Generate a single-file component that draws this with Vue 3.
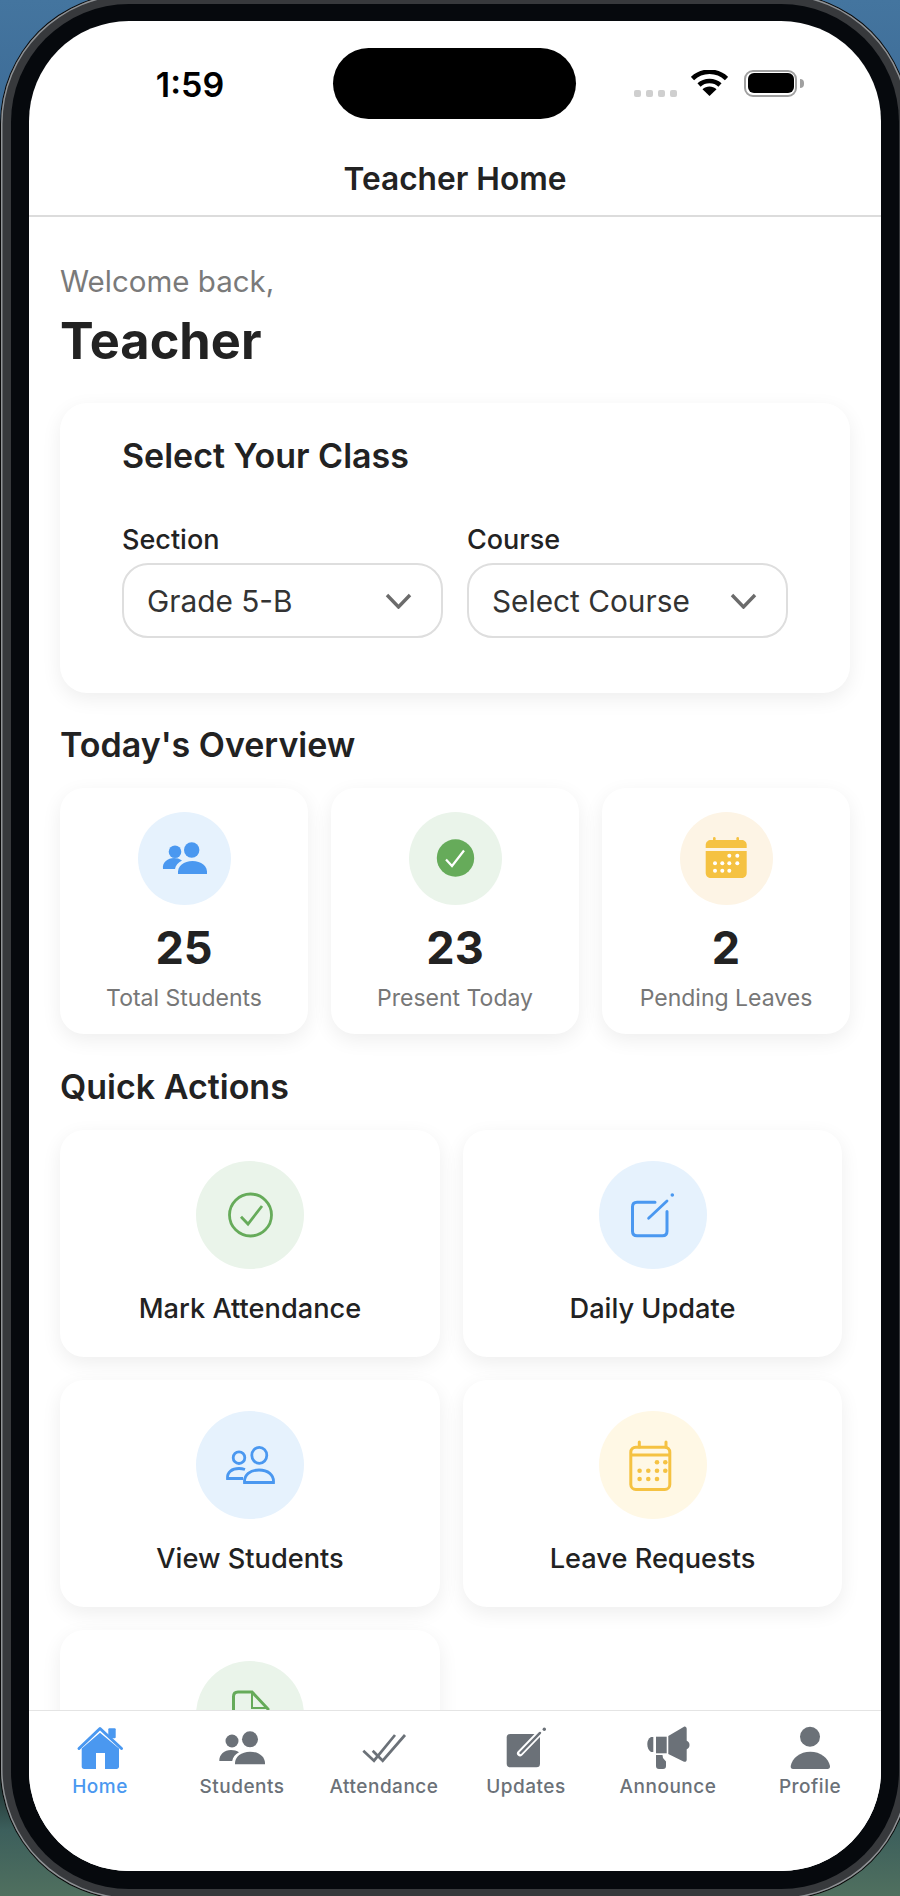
<template>
  <div class="desk">
    <div class="bezel">
      <div class="bezel-inner">
        <div class="screen">
          <div class="status-bar">
            <div class="time-wrap"><span class="time">1:59</span></div>
            <div class="island"></div>
            <div class="status-icons">
              <div class="signal"><i></i><i></i><i></i><i></i></div>
              <svg class="wifi" width="37" height="26" viewBox="0 0 37 26">
                <path d="M1.5 8.5C11 -0.5 26 -0.5 35.5 8.5" fill="none" stroke="#000" stroke-width="4.6" />
                <path d="M8 15C13.8 9.7 23.2 9.7 29 15" fill="none" stroke="#000" stroke-width="4.6" />
                <path d="M11.5 19.2C15.5 15.6 21.5 15.6 25.5 19.2L18.5 26Z" fill="#000" />
              </svg>
              <div class="battery"><div class="battery-level"></div></div>
              <div class="battery-nub"></div>
            </div>
          </div>

          <header class="top-header">Teacher Home</header>

          <main class="content">
            <p class="welcome">Welcome back,</p>
            <h1 class="name">Teacher</h1>

            <section class="class-card">
              <h2 class="class-title">Select Your Class</h2>
              <div class="pickers">
                <div class="picker" v-for="p in pickers" :key="p.label">
                  <label>{{ p.label }}</label>
                  <div class="select-box">
                    <span>{{ p.value }}</span>
                    <svg width="27" height="16" viewBox="0 0 27 16">
                      <path d="M2 2L13.5 14L25 2" fill="none" stroke="#6b6b6b" stroke-width="3.4" />
                    </svg>
                  </div>
                </div>
              </div>
            </section>

            <h2 class="section-title overview-title">Today's Overview</h2>
            <div class="stats">
              <div class="stat-card">
                <div class="stat-icon blue-bg">
                  <svg width="93" height="93" viewBox="0 0 93 93" fill="#4a98f0">
                    <circle cx="53.7" cy="38" r="7.7" />
                    <circle cx="37" cy="39.7" r="6.3" />
                    <path d="M40 62C39 54 46 49 54.500 49C63 49 70 54 69 62Z" />
                    <path d="M25 57C24 50 30 46 36 46C39 46 41.500 46.800 44 48.500C40 50.500 37.500 53.500 37 57Z" />
                  </svg>
                </div>
                <div class="stat-num">25</div>
                <div class="stat-label">Total Students</div>
              </div>
              <div class="stat-card">
                <div class="stat-icon green-bg">
                  <svg width="93" height="93" viewBox="0 0 93 93">
                    <circle cx="46.500" cy="46" r="18.700" fill="#66ab5a" />
                    <path d="M37 47.500L43 54L55 38.500" fill="none" stroke="#fff" stroke-width="2.200" />
                  </svg>
                </div>
                <div class="stat-num">23</div>
                <div class="stat-label">Present Today</div>
              </div>
              <div class="stat-card">
                <div class="stat-icon orange-bg">
                  <svg width="93" height="93" viewBox="0 0 93 93" fill="#f5c242">
                    <path d="M25.700 36V33C25.700 30 28 28 31 28H61.400C64.400 28 66.700 30 66.700 33V36Z" />
                    <rect x="33" y="25" width="2.600" height="5" rx="1.300" />
                    <rect x="56.400" y="25" width="2.600" height="5" rx="1.300" />
                    <path d="M25.700 39H66.700V61C66.700 64 64.400 66 61.400 66H31C28 66 25.700 64 25.700 61Z" />
                    <g fill="#fff">
                      <circle v-for="d in statDots" :key="d[0] + '-' + d[1]" :cx="d[0]" :cy="d[1]" r="2" />
                    </g>
                  </svg>
                </div>
                <div class="stat-num">2</div>
                <div class="stat-label">Pending Leaves</div>
              </div>
            </div>

            <h2 class="section-title actions-title">Quick Actions</h2>
            <div class="actions">
              <div class="action-card">
                <div class="action-icon green-bg">
                  <svg width="108" height="108" viewBox="0 0 108 108" fill="none" stroke="#66ab5a" stroke-width="2.800">
                    <circle cx="54.500" cy="54" r="21" />
                    <path d="M45 55.700L52 63L66 45" />
                  </svg>
                </div>
                <span>Mark Attendance</span>
              </div>
              <div class="action-card">
                <div class="action-icon blue-bg">
                  <svg width="108" height="108" viewBox="0 0 108 108" fill="none" stroke="#4a98f0" stroke-width="3" stroke-linecap="round">
                    <path d="M56 41.200H38C35 41.200 33.500 42.700 33.500 45.700V70.300C33.500 73.300 35 74.800 38 74.800H63.500C66.500 74.800 68 73.300 68 70.300V50.500" />
                    <path d="M49.600 57.300L68 40" stroke-width="2.800" />
                    <circle cx="73.300" cy="34" r="1.800" fill="#4a98f0" stroke="none" />
                  </svg>
                </div>
                <span>Daily Update</span>
              </div>
              <div class="action-card">
                <div class="action-icon blue-bg">
                  <svg width="108" height="108" viewBox="0 0 108 108" fill="none" stroke="#4a98f0" stroke-width="2.800">
                    <ellipse cx="63.300" cy="44.300" rx="7.500" ry="8" />
                    <circle cx="43" cy="46.700" r="5.800" />
                    <path d="M48.500 71.500C48 64 54 59 63 59C72 59 78 64 77.500 71.500Z" />
                    <path d="M47 67.500H31.500C31 61 36 57.500 43 57.500C45 57.500 47 57.800 49 58.500" />
                  </svg>
                </div>
                <span>View Students</span>
              </div>
              <div class="action-card">
                <div class="action-icon yellow-bg">
                  <svg width="108" height="108" viewBox="0 0 108 108" fill="none" stroke="#f5c242" stroke-width="3">
                    <rect x="31.800" y="36.200" width="39" height="42.300" rx="5" />
                    <path d="M31.800 44H70.800" />
                    <path d="M40.300 31V36M67 31V36" stroke-linecap="round" />
                    <g fill="#f5c242" stroke="none">
                      <circle v-for="d in actionDots" :key="d[0] + '-' + d[1]" :cx="d[0]" :cy="d[1]" r="2.300" />
                    </g>
                  </svg>
                </div>
                <span>Leave Requests</span>
              </div>
              <div class="action-card">
                <div class="action-icon green-bg">
                  <svg width="108" height="108" viewBox="0 0 108 108" fill="none" stroke="#66ab5a" stroke-width="3">
                    <path d="M42 31H56L72 48V72C72 75 70 77 67 77H42C39 77 37.500 75 37.500 72V35.500C37.500 33 39 31 42 31Z" />
                    <path d="M56 31V47H72" stroke-width="2" />
                  </svg>
                </div>
              </div>
            </div>
          </main>

          <nav class="tab-bar">
            <div class="tab active">
              <svg width="60" height="46" viewBox="0 0 60 46" fill="#4a98f0">
                <path d="M9 23.500L30 3.500L51.500 23.500" fill="none" stroke="#4a98f0" stroke-width="3" stroke-linecap="round" stroke-linejoin="round" />
                <rect x="38.300" y="3.300" width="7.400" height="10" rx="1" />
                <path d="M11.700 23.500L30 7.700L49 23.500V41.500C49 43 48 44 46.500 44H35V28H26V44H14.200C12.700 44 11.700 43 11.700 41.500Z" />
              </svg>
              <span>Home</span>
            </div>
            <div class="tab">
              <svg width="60" height="46" viewBox="0 0 60 46" fill="#6b7178">
                <circle cx="38" cy="14.300" r="8" />
                <circle cx="20" cy="16" r="6.500" />
                <path d="M23 39.300C22.500 32 29 26.700 38 26.700C47 26.700 53.500 32 53 39.300Z" />
                <path d="M7.300 36C7 29.500 12.500 25 19 25C22 25 24.800 25.800 27 27.300C23 29.300 20.800 32.500 20.200 36Z" />
              </svg>
              <span>Students</span>
            </div>
            <div class="tab">
              <svg width="60" height="46" viewBox="0 0 60 46" fill="none" stroke="#6b7178" stroke-width="2.700">
                <path d="M9.300 25.700L20 35.700L41 10" />
                <path d="M18.700 25.700L28.700 35.700L51 10" />
              </svg>
              <span>Attendance</span>
            </div>
            <div class="tab">
              <svg width="60" height="46" viewBox="0 0 60 46">
                <rect x="10.700" y="9" width="33.300" height="33.300" rx="3.500" fill="#6b7178" />
                <path d="M24 28.300L44 7.700" fill="none" stroke="#fff" stroke-width="6" stroke-linecap="round" />
                <path d="M24.500 28L44 7.900" fill="none" stroke="#6b7178" stroke-width="2.400" stroke-linecap="round" />
                <circle cx="48.300" cy="4.300" r="1.700" fill="#6b7178" />
              </svg>
              <span>Updates</span>
            </div>
            <div class="tab">
              <svg width="60" height="46" viewBox="0 0 60 46" fill="#6b7178">
                <path d="M9.300 19C9.300 16 10.500 13.500 13 12H15.300V27H13C10.500 25.500 9.300 22.500 9.300 19Z" />
                <rect x="18" y="11.700" width="10.700" height="16.600" />
                <path d="M18 30H24.500L25 33L28 36.500V41C28 43 27 44 25 44H21C19 44 18 43 18 41Z" />
                <path d="M30.300 11L46 1.700C47.600 1.300 48.700 2.300 48.700 4V34.500C48.700 36.300 47.500 37.200 46 36.700L30.300 29Z" />
                <path d="M48 15.500C50.500 16 51.500 18 51.500 20C51.500 22 50.500 24 48 24.500Z" />
              </svg>
              <span>Announce</span>
            </div>
            <div class="tab">
              <svg width="60" height="46" viewBox="0 0 60 46" fill="#6b7178">
                <circle cx="30" cy="11.700" r="10" />
                <path d="M10.700 41C12 33 20 26.700 30.300 26.700C40.500 26.700 48.500 33 50 41C50.300 43 49 44 47.500 44H13C11.500 44 10.500 43 10.700 41Z" />
              </svg>
              <span>Profile</span>
            </div>
          </nav>
        </div>
      </div>
    </div>
  </div>
</template>

<script setup>
const pickers = [
  { label: 'Section', value: 'Grade 5-B' },
  { label: 'Course', value: 'Select Course' }
]

const statDots = [
  [49.3, 43.7], [57.3, 43.7],
  [35, 51.3], [42.3, 51.3], [49.3, 51.3], [57.3, 51.3],
  [35, 58.7], [42.3, 58.7], [49.3, 58.7]
]

const actionDots = [
  [58, 51.3], [66.3, 51.3],
  [40.6, 59.7], [49.3, 59.7], [58, 59.7], [66.3, 59.7],
  [40.6, 68], [49.3, 68], [58, 68]
]
</script>

<style>
html, body {
  margin: 0;
  background: #0c0c0c;
}
</style>

<style scoped>
.desk {
  width: 900px;
  height: 1896px;
  overflow: hidden;
  display: flex;
  align-items: flex-start;
  font-family: Inter, "Liberation Sans", sans-serif;
  color: #222;
  background: linear-gradient(180deg, #44759f 0, #3c6a95 140px, #0b0c0d 300px, #0b0c0d 1740px, #3c5f5c 1830px, #50705f 1896px);
}

.bezel {
  flex: none;
  width: 908px;
  margin: -6px 0 0 1px;
  padding: 10px;
  box-sizing: border-box;
  border-radius: 130px;
  background: #37393c;
  box-shadow: inset 0 0 0 1.5px #8f9295, 0 0 0 1px #0a0a0a;
}

.bezel-inner {
  padding: 17px 18px 18px;
  border-radius: 118px;
  background: #06090d;
}

.screen {
  height: 1850px;
  border-radius: 100px;
  overflow: hidden;
  background: #fff;
  display: flex;
  flex-direction: column;
}

.status-bar {
  flex: none;
  height: 120px;
  display: flex;
}

.time-wrap {
  width: 304px;
  padding: 41px 0 0 18px;
  box-sizing: border-box;
  text-align: center;
}

.time {
  font-size: 34px;
  line-height: 46px;
  font-weight: 600;
  color: #000;
}

.island {
  width: 243px;
  height: 71px;
  margin-top: 27px;
  border-radius: 36px;
  background: #000;
}

.status-icons {
  display: flex;
  align-items: center;
  height: 28px;
  margin: 48px 0 0 58px;
}

.signal {
  display: flex;
  gap: 5px;
  margin: 20px 14px 0 0;
}

.signal i {
  width: 7px;
  height: 7px;
  border-radius: 2px;
  background: #cfcfcf;
}

.wifi {
  margin-right: 16px;
}

.battery {
  width: 53px;
  height: 27px;
  padding: 1.5px;
  box-sizing: border-box;
  border: 2.5px solid #a0a0a0;
  border-radius: 9px;
}

.battery-level {
  height: 100%;
  border-radius: 6px;
  background: #000;
}

.battery-nub {
  width: 4px;
  height: 9px;
  margin-left: 3px;
  border-radius: 0 4px 4px 0;
  background: #a0a0a0;
}

.top-header {
  flex: none;
  height: 76px;
  line-height: 76px;
  text-align: center;
  font-size: 31.7px;
  font-weight: 600;
  border-bottom: 2px solid #dcdcdc;
  box-sizing: border-box;
}

.content {
  flex: 1;
  min-height: 0;
  overflow: hidden;
  padding: 46px 31px 0;
}

.welcome {
  margin: 0;
  font-size: 29.5px;
  line-height: 36px;
  color: #7a7a7a;
}

.name {
  margin: 12px 0 32px;
  font-size: 50.5px;
  line-height: 60px;
  font-weight: 700;
}

.class-card {
  height: 290px;
  padding: 33px 62px 0;
  box-sizing: border-box;
  border-radius: 27px;
  background: #fff;
  box-shadow: 0 6px 20px rgba(0, 0, 0, 0.07);
}

.class-title {
  margin: 0 0 48px;
  font-size: 34px;
  line-height: 40px;
  font-weight: 600;
}

.pickers {
  display: flex;
  gap: 24px;
}

.picker {
  flex: 1;
}

.picker label {
  display: block;
  margin-bottom: 7px;
  font-size: 27px;
  line-height: 32px;
  font-weight: 500;
}

.select-box {
  height: 75px;
  padding: 0 29px 0 23px;
  box-sizing: border-box;
  display: flex;
  align-items: center;
  justify-content: space-between;
  border: 2px solid #dedede;
  border-radius: 26px;
  font-size: 29.8px;
  color: #333;
}

.section-title {
  margin: 0;
  font-size: 34px;
  line-height: 40px;
  font-weight: 600;
}

.overview-title {
  margin: 32px 0 23px;
}

.stats {
  display: grid;
  grid-template-columns: repeat(3, 248px);
  gap: 23px;
}

.stat-card {
  height: 246px;
  padding-top: 24px;
  box-sizing: border-box;
  border-radius: 24px;
  background: #fff;
  box-shadow: 0 6px 20px rgba(0, 0, 0, 0.07);
  text-align: center;
}

.stat-icon {
  width: 93px;
  height: 93px;
  margin: 0 auto;
  border-radius: 50%;
}

.stat-icon svg,
.action-icon svg {
  display: block;
}

.blue-bg {
  background: #e6f2fd;
}

.green-bg {
  background: #eaf4ea;
}

.orange-bg {
  background: #fdf4e5;
}

.yellow-bg {
  background: #fff8e5;
}

.stat-num {
  margin-top: 16px;
  font-size: 45px;
  line-height: 54px;
  font-weight: 700;
}

.stat-label {
  margin-top: 9px;
  font-size: 23px;
  line-height: 28px;
  color: #777;
}

.actions-title {
  margin: 33px 0 23px;
}

.actions {
  display: grid;
  grid-template-columns: 380px 379px;
  gap: 23px;
}

.action-card {
  height: 227px;
  padding-top: 31px;
  box-sizing: border-box;
  border-radius: 24px;
  background: #fff;
  box-shadow: 0 6px 20px rgba(0, 0, 0, 0.07);
  text-align: center;
  font-size: 27.2px;
  line-height: 32px;
  font-weight: 500;
}

.action-icon {
  width: 108px;
  height: 108px;
  margin: 0 auto 24px;
  border-radius: 50%;
}

.tab-bar {
  flex: none;
  height: 161px;
  padding-top: 14px;
  box-sizing: border-box;
  display: flex;
  background: #fff;
  border-top: 1px solid #e4e4e4;
}

.tab {
  flex: 1;
  display: flex;
  flex-direction: column;
  align-items: center;
  font-size: 19px;
  line-height: 24px;
  font-weight: 500;
  letter-spacing: 0.5px;
  color: #6b7178;
}

.tab svg {
  display: block;
  margin-bottom: 4px;
}

.tab.active {
  color: #4a98f0;
}
</style>
